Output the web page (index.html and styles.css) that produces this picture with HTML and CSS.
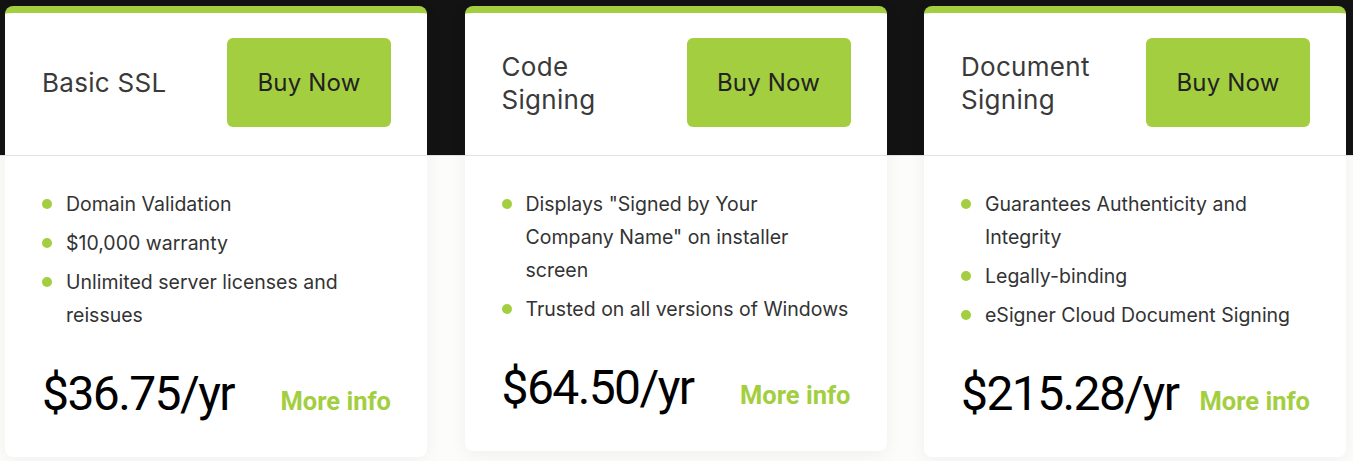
FILE: index.html
```html
<!DOCTYPE html>
<html lang="en">
<head>
<meta charset="utf-8">
<title>Pricing</title>
<link rel="stylesheet" href="styles.css">
</head>
<body>
<section class="pricing">
  <div class="cards">
    <article class="card">
      <header class="card-head">
        <h3 class="card-title">Basic SSL</h3>
        <a class="buy" href="#">Buy Now</a>
      </header>
      <div class="card-body">
        <ul class="features">
          <li>Domain Validation</li>
          <li>$10,000 warranty</li>
          <li>Unlimited server licenses and reissues</li>
        </ul>
        <div class="price-row">
          <span class="price">$36.75/yr</span>
          <a class="more" href="#">More info</a>
        </div>
      </div>
    </article>
    <article class="card">
      <header class="card-head">
        <h3 class="card-title">Code Signing</h3>
        <a class="buy" href="#">Buy Now</a>
      </header>
      <div class="card-body">
        <ul class="features">
          <li>Displays "Signed by Your Company Name" on installer screen</li>
          <li>Trusted on all versions of Windows</li>
        </ul>
        <div class="price-row">
          <span class="price">$64.50/yr</span>
          <a class="more" href="#">More info</a>
        </div>
      </div>
    </article>
    <article class="card">
      <header class="card-head">
        <h3 class="card-title">Document Signing</h3>
        <a class="buy" href="#">Buy Now</a>
      </header>
      <div class="card-body">
        <ul class="features">
          <li>Guarantees Authenticity and Integrity</li>
          <li>Legally-binding</li>
          <li>eSigner Cloud Document Signing</li>
        </ul>
        <div class="price-row">
          <span class="price">$215.28/yr</span>
          <a class="more" href="#">More info</a>
        </div>
      </div>
    </article>
  </div>
</section>
</body>
</html>
```

FILE: styles.css
```css
* { box-sizing: border-box; }
html, body { margin: 0; padding: 0; }
body {
  font-family: "Inter", "Noto Sans", sans-serif;
  background: #fcfcfb;
}
.pricing {
  background: linear-gradient(to bottom, #131313 0, #131313 155px, #e3e3e3 155px, #e3e3e3 156px, #fcfcfb 156px);
  padding: 6px 0 0 5px;
  height: 461px;
}
.cards {
  display: grid;
  grid-template-columns: repeat(3, 422px);
  column-gap: 37.5px;
  align-items: start;
}
.card {
  background: #fff;
  border-top: 7px solid #a3ce40;
  border-radius: 8px;
  box-shadow: 0 4px 18px rgba(0, 0, 0, 0.05);
}
.card-head {
  display: flex;
  align-items: center;
  justify-content: space-between;
  padding: 25px 36px 28px 37px;
  border-bottom: 1px solid #e3e3e3;
}
.card-title {
  margin: 0;
  font-weight: 400;
  font-size: 26px;
  line-height: 33px;
  color: #3a3a3a;
  max-width: 150px;
  letter-spacing: 0.3px;
}
.buy {
  display: flex;
  align-items: center;
  justify-content: center;
  width: 164px;
  height: 89px;
  background: #a3ce40;
  border-radius: 6px;
  color: #222;
  text-decoration: none;
  font-size: 24px;
  letter-spacing: 0.2px;
}
.card-body {
  padding: 32px 36px 33px 37px;
}
.features {
  list-style: none;
  margin: 0;
  padding: 0;
  display: flex;
  flex-direction: column;
  gap: 6px;
}
.features li {
  position: relative;
  padding-left: 24px;
  font-size: 19.5px;
  line-height: 33px;
  color: #333;
}
.features li::before {
  content: "";
  position: absolute;
  left: 0;
  top: 11px;
  width: 10px;
  height: 10px;
  border-radius: 50%;
  background: #a3ce40;
}
.price-row {
  display: flex;
  align-items: baseline;
  justify-content: space-between;
  margin-top: 32px;
}
.price {
  font-family: "Roboto", "Liberation Sans", sans-serif;
  font-size: 48px;
  letter-spacing: -1.6px;
  line-height: 60px;
  color: #000;
}
.more {
  font-family: "Roboto", "Liberation Sans", sans-serif;
  font-weight: 700;
  font-size: 25.5px;
  color: #a3ce40;
  text-decoration: none;
}
```
